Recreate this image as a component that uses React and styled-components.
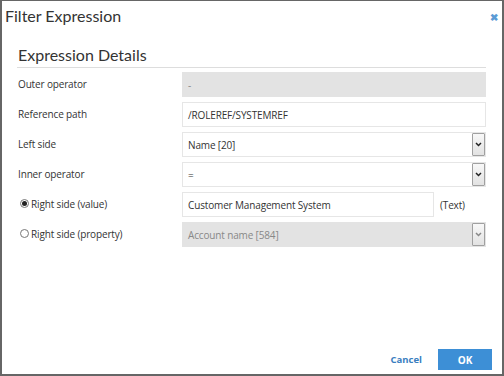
import React from "react";
import styled, { createGlobalStyle } from "styled-components";

const GlobalStyle = createGlobalStyle`
  html, body {
    margin: 0;
    padding: 0;
    background: #fff;
  }
  * {
    box-sizing: border-box;
  }
`;

const Window = styled.div`
  width: 504px;
  height: 376px;
  border: 2px solid #666;
  border-top-width: 1px;
  background: #fff;
  display: flex;
  flex-direction: column;
  font-family: "Open Sans", "Liberation Sans", sans-serif;
  color: #333;
`;

const Header = styled.div`
  display: flex;
  align-items: center;
  justify-content: space-between;
  height: 29px;
  padding: 0 4px 0 3px;
`;

const Title = styled.h1`
  margin: 0;
  font-family: Lato, "Open Sans", sans-serif;
  font-weight: 400;
  font-size: 16px;
  color: #333;
`;

const Close = styled.span`
  color: #5b9bd5;
  font-size: 10px;
  font-weight: 700;
  line-height: 1;
  margin-top: 3px;
`;

const Body = styled.div`
  padding: 15px 16px 0 15px;
`;

const SectionTitle = styled.h2`
  margin: 0;
  padding: 0 0 3px 1px;
  font-family: Lato, "Open Sans", sans-serif;
  font-weight: 400;
  font-size: 16px;
  color: #333;
  border-bottom: 1px solid #ddd;
`;

const Form = styled.div`
  display: grid;
  grid-template-columns: 165px 1fr;
  grid-auto-rows: 25px;
  row-gap: 5px;
  margin-top: 4px;
`;

const Label = styled.label`
  display: flex;
  align-items: center;
  gap: 2px;
  padding-left: ${(p) => (p.$radio ? "3px" : "1px")};
  font-size: 10px;
  letter-spacing: -0.15px;
  color: #333;
  height: 25px;
  margin-top: -1px;
`;

const FieldRow = styled.div`
  display: flex;
  align-items: center;
  gap: 6px;
`;

const Field = styled.div`
  flex: ${(p) => (p.$narrow ? "0 0 252px" : "1")};
  height: 25px;
  display: flex;
  align-items: center;
  padding-left: 5px;
  font-size: 10px;
  letter-spacing: -0.15px;
  color: ${(p) => (p.$disabled ? "#888" : "#333")};
  background: ${(p) => (p.$disabled ? "#e3e3e3" : "#fff")};
  border: 1px solid ${(p) => (p.$disabled ? "#e3e3e3" : "#e6e6e6")};
`;

const SelectBox = styled(Field)`
  padding-right: 0;
  justify-content: space-between;
`;

const Arrow = styled.span`
  width: 13px;
  height: 23px;
  display: flex;
  align-items: center;
  justify-content: center;
  background: linear-gradient(#f8f8f8, #e2e2e2);
  border: 1px solid #a0a0a0;
  border-radius: 1px;
  color: ${(p) => (p.$disabled ? "#888" : "#222")};
`;

const Hint = styled.span`
  font-size: 10px;
  letter-spacing: -0.15px;
  color: #333;
`;

const Radio = styled.span`
  width: 9px;
  height: 9px;
  border-radius: 50%;
  border: 1px solid #777;
  background: #fff;
  display: inline-flex;
  align-items: center;
  justify-content: center;
  &::after {
    content: "";
    width: 5px;
    height: 5px;
    border-radius: 50%;
    background: ${(p) => (p.$checked ? "#222" : "transparent")};
  }
`;

const Footer = styled.div`
  margin-top: auto;
  display: flex;
  justify-content: flex-end;
  align-items: center;
  gap: 16px;
  padding: 0 10px 4px 0;
`;

const TextButton = styled.button`
  border: none;
  background: none;
  padding: 0;
  font-family: "Open Sans", sans-serif;
  font-weight: 700;
  font-size: 9.5px;
  color: #3a7ebf;
`;

const PrimaryButton = styled.button`
  width: 54px;
  height: 21px;
  border: none;
  background: #3d8fd6;
  color: #fff;
  font-family: "Open Sans", sans-serif;
  font-weight: 700;
  font-size: 10px;
`;

const Chevron = () => (
  <svg width="7" height="5" viewBox="0 0 7 5">
    <path d="M1 1 L3.5 3.5 L6 1" stroke="currentColor" strokeWidth="1.5" fill="none" />
  </svg>
);

export default function App() {
  return (
    <>
      <GlobalStyle />
      <Window>
        <Header>
          <Title>Filter Expression</Title>
          <Close>✖</Close>
        </Header>
        <Body>
          <SectionTitle>Expression Details</SectionTitle>
          <Form>
            <Label>Outer operator</Label>
            <Field $disabled>-</Field>

            <Label>Reference path</Label>
            <Field>/ROLEREF/SYSTEMREF</Field>

            <Label>Left side</Label>
            <SelectBox>
              Name [20]
              <Arrow><Chevron /></Arrow>
            </SelectBox>

            <Label>Inner operator</Label>
            <SelectBox>
              =
              <Arrow><Chevron /></Arrow>
            </SelectBox>

            <Label $radio>
              <Radio $checked />
              Right side (value)
            </Label>
            <FieldRow>
              <Field $narrow>Customer Management System</Field>
              <Hint>(Text)</Hint>
            </FieldRow>

            <Label $radio>
              <Radio />
              Right side (property)
            </Label>
            <SelectBox $disabled>
              Account name [584]
              <Arrow $disabled><Chevron /></Arrow>
            </SelectBox>
          </Form>
        </Body>
        <Footer>
          <TextButton>Cancel</TextButton>
          <PrimaryButton>OK</PrimaryButton>
        </Footer>
      </Window>
    </>
  );
}
